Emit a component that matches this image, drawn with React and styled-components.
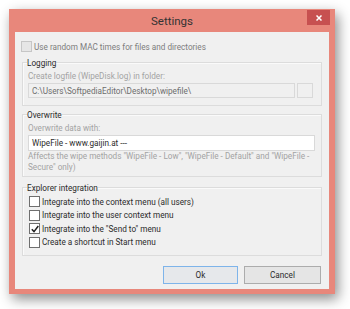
import React from 'react';
import styled, { createGlobalStyle } from 'styled-components';

const GlobalStyle = createGlobalStyle`
  html, body {
    margin: 0;
    background: #ffffff;
  }
  body {
    font-family: Roboto, "Noto Sans", sans-serif;
    font-size: 8.2px;
    color: #2b2b2b;
  }
`;

const Page = styled.div`
  width: 350px;
  height: 309px;
  padding: 9px 0 0 9px;
  box-sizing: border-box;
`;

const Window = styled.div`
  width: 326px;
  height: 285px;
  background: #e8877b;
  box-shadow: 3px 5px 12px rgba(0, 0, 0, 0.45);
  display: flex;
  flex-direction: column;
`;

const TitleBar = styled.div`
  height: 23px;
  flex: none;
  display: grid;
  grid-template-columns: 1fr auto 1fr;
`;

const Title = styled.div`
  grid-column: 2;
  align-self: center;
  font-size: 11.5px;
  color: #333333;
  padding-top: 1px;
`;

const CloseButton = styled.div`
  grid-column: 3;
  justify-self: end;
  width: 23px;
  height: 15px;
  margin: 1px 5px 0 0;
  background: #c75050;
  display: flex;
  align-items: center;
  justify-content: center;
`;

const Client = styled.div`
  flex: 1;
  margin: 0 6px 5px 6px;
  background: #f0f0f0;
  padding: 8px 7px 0 7px;
  display: flex;
  flex-direction: column;
`;

const CheckRow = styled.div`
  display: flex;
  align-items: center;
  height: ${p => p.$h || 13}px;
  gap: 2px;
  margin-left: ${p => p.$indent || 0}px;
  color: ${p => (p.$disabled ? '#7d7d7d' : '#2b2b2b')};
  white-space: nowrap;
`;

const Box = styled.span`
  width: 9px;
  height: 9px;
  flex: none;
  border: 1px solid ${p => (p.$disabled ? '#c6c6c6' : '#6f6f6f')};
  background: ${p => (p.$disabled ? '#e6e6e6' : '#ffffff')};
  display: flex;
  align-items: center;
  justify-content: center;
`;

const Group = styled.div`
  margin-top: ${p => p.$top || 0}px;
  padding: 0 6px ${p => p.$bottom || 7}px 5px;
  border: 1px solid #dcdcdc;
  box-shadow: inset 1px 1px 0 #fafafa;
  display: flex;
  flex-direction: column;
`;

const GroupTitle = styled.div`
  align-self: flex-start;
  margin: -7px 0 0 -1px;
  line-height: 14px;
  background: #f0f0f0;
  color: #2b2b2b;
`;

const Hint = styled.div`
  line-height: ${p => p.$lh || 12}px;
  color: #a3a3a3;
  white-space: nowrap;
`;

const InputRow = styled.div`
  display: flex;
  gap: 2px;
  margin-top: 1px;
`;

const TextBox = styled.div`
  flex: 1;
  height: ${p => p.$h || 15}px;
  box-sizing: border-box;
  border: 1px solid #d9d9d9;
  background: ${p => (p.$disabled ? '#f0f0f0' : '#ffffff')};
  color: ${p => (p.$disabled ? '#6d6d6d' : '#2b2b2b')};
  padding: 0 3px;
  display: flex;
  align-items: center;
  white-space: nowrap;
  overflow: hidden;
`;

const BrowseButton = styled.div`
  width: 16px;
  height: 15px;
  margin-right: 2px;
  box-sizing: border-box;
  border: 1px solid #d9d9d9;
  background: #f0f0f0;
`;

const Buttons = styled.div`
  display: flex;
  justify-content: flex-end;
  gap: 6px;
  margin-top: 10px;
  padding-right: 1px;
`;

const Button = styled.div`
  width: ${p => p.$w}px;
  height: 18px;
  box-sizing: border-box;
  border: 1px solid ${p => (p.$focused ? '#7eb4ea' : '#acacac')};
  background: ${p => (p.$focused ? '#e6e8eb' : '#e5e5e5')};
  display: flex;
  align-items: center;
  justify-content: center;
  color: #2b2b2b;
`;

const Check = () => (
  <svg width="8" height="8" viewBox="0 0 8 8">
    <path d="M0.8 4.2 L3 6.6 L7.3 1" fill="none" stroke="#1f1f1f" strokeWidth="1.5" />
  </svg>
);

const options = [
  { text: 'Integrate into the context menu (all users)', checked: false },
  { text: 'Integrate into the user context menu', checked: false },
  { text: 'Integrate into the "Send to" menu', checked: true },
  { text: 'Create a shortcut in Start menu', checked: false },
];

export default function App() {
  return (
    <Page>
      <GlobalStyle />
      <Window>
        <TitleBar>
          <Title>Settings</Title>
          <CloseButton>
            <svg width="6" height="6" viewBox="0 0 6 6">
              <path d="M0.5 0.5 L5.5 5.5 M5.5 0.5 L0.5 5.5" stroke="#ffffff" strokeWidth="1.5" />
            </svg>
          </CloseButton>
        </TitleBar>
        <Client>
          <CheckRow $disabled $indent={-1}>
            <Box $disabled />
            Use random MAC times for files and directories
          </CheckRow>

          <Group $top={9}>
            <GroupTitle>Logging</GroupTitle>
            <Hint>Create logfile (WipeDisk.log) in folder:</Hint>
            <InputRow>
              <TextBox $disabled>C:\Users\SoftpediaEditor\Desktop\wipefile\</TextBox>
              <BrowseButton />
            </InputRow>
          </Group>

          <Group $top={8} $bottom={3}>
            <GroupTitle>Overwrite</GroupTitle>
            <Hint>Overwrite data with:</Hint>
            <InputRow>
              <TextBox $h={16}>WipeFile - www.gaijin.at ---</TextBox>
            </InputRow>
            <Hint $lh={11}>
              Affects the wipe methods "WipeFile - Low", "WipeFile - Default" and "WipeFile -
              <br />
              Secure" only)
            </Hint>
          </Group>

          <Group $top={10} $bottom={6}>
            <GroupTitle>Explorer integration</GroupTitle>
            {options.map(o => (
              <CheckRow key={o.text} $h={13.5} $indent={1}>
                <Box>{o.checked && <Check />}</Box>
                {o.text}
              </CheckRow>
            ))}
          </Group>

          <Buttons>
            <Button $w={75} $focused>Ok</Button>
            <Button $w={77}>Cancel</Button>
          </Buttons>
        </Client>
      </Window>
    </Page>
  );
}
